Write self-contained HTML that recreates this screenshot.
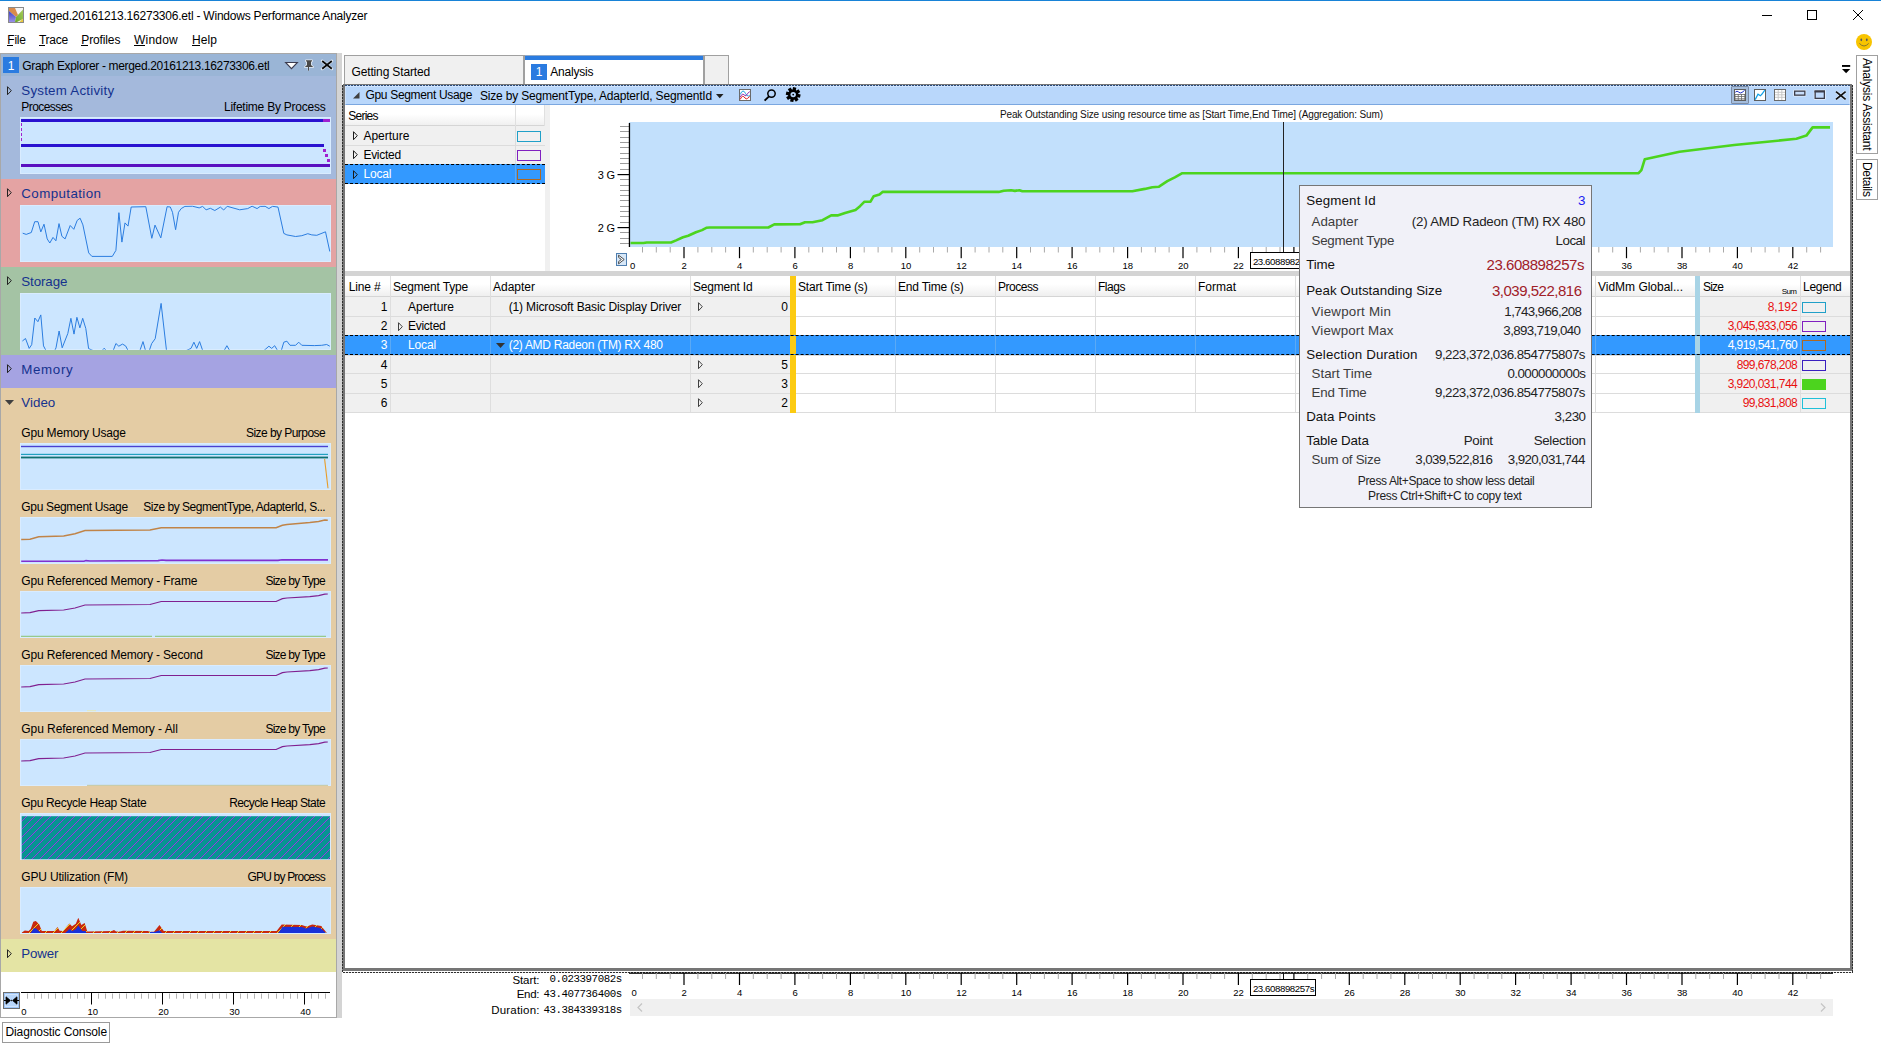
<!DOCTYPE html>
<html lang="en"><head><meta charset="utf-8"><title>merged.20161213.16273306.etl - Windows Performance Analyzer</title>
<style>
html,body{margin:0;padding:0;background:#fff;}
body{width:1881px;height:1045px;overflow:hidden;font-family:"Liberation Sans",sans-serif;font-size:12px;color:#000;}
#app{position:relative;width:1881px;height:1045px;overflow:hidden;background:#fff;}
.b{position:absolute;box-sizing:border-box;}
.t{position:absolute;white-space:pre;}
svg{position:absolute;overflow:visible;}
u{text-decoration:underline;text-underline-offset:1px;}
.vt{writing-mode:vertical-rl;transform-origin:0 0;}

</style></head>
<body>
<div id="app">
<header id="titlebar">
<div class="b" style="left:0px;top:0px;width:1881px;height:1px;background:#1883d7;"></div>
<svg style="left:8px;top:7px" width="16" height="16" viewBox="0 0 16 16" ><defs><linearGradient id="gb" x1="0" y1="0" x2="0" y2="1"><stop offset="0" stop-color="#3f3fc4"/><stop offset="1" stop-color="#9a92e6"/></linearGradient>
<linearGradient id="gg" x1="0" y1="1" x2="1" y2="0"><stop offset="0" stop-color="#6aa82a"/><stop offset="1" stop-color="#a8cc5a"/></linearGradient></defs>
<rect x="0.5" y="0.5" width="15" height="15" fill="#f6f6f6" stroke="#8a8a8a"/>
<path d="M1 1 L7 1 L10 8 L8 10 L1 4 Z" fill="#d98c4c"/><path d="M1 4 L8 10 L7 15 L1 15 Z" fill="url(#gb)"/>
<path d="M8 10 L15 2.5 L15 12 L9 15 L7 15 Z" fill="url(#gg)"/><path d="M11.5 15 L15 11.5 L15 15 Z" fill="#e8c840"/></svg>
<span class="t" style="top:8px;font-size:12px;line-height:16px;letter-spacing:-0.218px;left:29.30px;">merged.20161213.16273306.etl - Windows Performance Analyzer</span>
<svg style="left:1762px;top:15px" width="10" height="1" viewBox="0 0 10 1" ><rect width="10" height="1" fill="#000"/></svg>
<svg style="left:1807px;top:10px" width="10" height="10" viewBox="0 0 10 10" ><rect x="0.5" y="0.5" width="9" height="9" fill="none" stroke="#000"/></svg>
<svg style="left:1853px;top:10px" width="10" height="10" viewBox="0 0 10 10" ><path d="M0 0 L10 10 M10 0 L0 10" stroke="#000" stroke-width="1"/></svg>
</header>
<nav id="menubar">
<span class="t" style="top:32px;font-size:12px;line-height:16px;letter-spacing:-0.211px;left:7.30px;color:#000;">File</span>
<span class="t" style="top:32px;font-size:12px;line-height:16px;letter-spacing:-0.247px;left:38.90px;color:#000;">Trace</span>
<span class="t" style="top:32px;font-size:12px;line-height:16px;letter-spacing:-0.127px;left:81.30px;color:#000;">Profiles</span>
<span class="t" style="top:32px;font-size:12px;line-height:16px;letter-spacing:0.219px;left:134.00px;color:#000;">Window</span>
<span class="t" style="top:32px;font-size:12px;line-height:16px;letter-spacing:0.078px;left:192.00px;color:#000;">Help</span>
<div class="b" style="left:7.3px;top:45px;width:5.5px;height:1px;background:#000;"></div>
<div class="b" style="left:38.9px;top:45px;width:6px;height:1px;background:#000;"></div>
<div class="b" style="left:81.3px;top:45px;width:6.5px;height:1px;background:#000;"></div>
<div class="b" style="left:134px;top:45px;width:11px;height:1px;background:#000;"></div>
<div class="b" style="left:192px;top:45px;width:8px;height:1px;background:#000;"></div>
<svg style="left:1856px;top:34px" width="16" height="16" viewBox="0 0 16 16" ><circle cx="8" cy="8" r="8" fill="#f8c400"/><ellipse cx="5.3" cy="5.8" rx="0.9" ry="1.35" fill="#56565e"/><ellipse cx="10.8" cy="5.8" rx="0.9" ry="1.35" fill="#56565e"/>
<path d="M3.4 9.4 Q8 14.6 12.7 9.4" fill="none" stroke="#7a6c30" stroke-width="0.9"/></svg>
</nav>
<aside id="graph-explorer">
<div class="b" style="left:0px;top:53px;width:342px;height:965px;background:#d4d4d4;"></div>
<div class="b" style="left:0px;top:53px;width:337px;height:965px;background:#a8a8a8;"></div>
<div class="b" style="left:1px;top:54px;width:335px;height:963px;background:#fff;"></div>
<div class="b" style="left:1px;top:54px;width:335px;height:22px;background:#9ab5d6;"></div>
<div class="b" style="left:3px;top:57px;width:16px;height:16px;background:#2a7be0;"></div>
<span class="t" style="top:58px;font-size:12px;line-height:16px;left:7.66px;color:#fff;">1</span>
<span class="t" style="top:58px;font-size:12px;line-height:16px;letter-spacing:-0.338px;left:22.30px;">Graph Explorer - merged.20161213.16273306.etl</span>
<svg style="left:284px;top:61px" width="15" height="9" viewBox="0 0 15 9" ><path d="M1.6 1.5 L13.4 1.5 L7.5 7.6 Z" fill="#fff" stroke="#3c3c50" stroke-width="1.1" stroke-linejoin="miter"/></svg>
<svg style="left:302px;top:58px" width="14" height="14" viewBox="0 0 14 14" ><g fill="#fff" stroke="#fff" stroke-width="1.6" stroke-linejoin="round" opacity="0.75"><path d="M4 2.2 H10 V3.4 H9 V7 L11.2 9 H2.8 L5 7 V3.4 H4 Z"/><path d="M6.5 9 V12.4"/></g><path d="M4 2.2 H10 V3.4 H9 V7 L11.2 9 H2.8 L5 7 V3.4 H4 Z" fill="#4a4a4a"/><path d="M6.5 9 V12.6" stroke="#4a4a4a" stroke-width="1"/></svg>
<svg style="left:320px;top:59px" width="14" height="12" viewBox="0 0 14 12" ><path d="M2.2 2 L11.8 9.8 M11.8 2 L2.2 9.8" stroke="#fff" stroke-opacity="0.7" stroke-width="2.9" stroke-linecap="round"/><path d="M2.2 2 L11.8 9.8 M11.8 2 L2.2 9.8" stroke="#0a0a0a" stroke-width="1.8"/></svg>
<div class="b" style="left:1px;top:76px;width:335px;height:103px;background:#a4b9dc;"></div>
<span class="t" style="top:82px;font-size:13.33px;line-height:17px;letter-spacing:0.225px;left:21.30px;color:#15328e;">System Activity</span>
<svg style="left:7px;top:85.5px" width="6" height="10" viewBox="0 0 6 10" ><path d="M0.5 0.7 L0.5 8.7 L4.3 4.7 Z" fill="none" stroke="#222" stroke-width="1"/></svg>
<div class="b" style="left:1px;top:179px;width:335px;height:88px;background:#e4a3a3;"></div>
<span class="t" style="top:185px;font-size:13.33px;line-height:17px;letter-spacing:0.402px;left:21.30px;color:#15328e;">Computation</span>
<svg style="left:7px;top:188.3px" width="6" height="10" viewBox="0 0 6 10" ><path d="M0.5 0.7 L0.5 8.7 L4.3 4.7 Z" fill="none" stroke="#222" stroke-width="1"/></svg>
<div class="b" style="left:1px;top:267px;width:335px;height:88px;background:#a4c3a4;"></div>
<span class="t" style="top:273px;font-size:13.33px;line-height:17px;letter-spacing:-0.098px;left:21.30px;color:#15328e;">Storage</span>
<svg style="left:7px;top:276.4px" width="6" height="10" viewBox="0 0 6 10" ><path d="M0.5 0.7 L0.5 8.7 L4.3 4.7 Z" fill="none" stroke="#222" stroke-width="1"/></svg>
<div class="b" style="left:1px;top:355px;width:335px;height:33px;background:#a5a3e2;"></div>
<span class="t" style="top:361px;font-size:13.33px;line-height:17px;letter-spacing:0.643px;left:21.30px;color:#15328e;">Memory</span>
<svg style="left:7px;top:364.1px" width="6" height="10" viewBox="0 0 6 10" ><path d="M0.5 0.7 L0.5 8.7 L4.3 4.7 Z" fill="none" stroke="#222" stroke-width="1"/></svg>
<div class="b" style="left:1px;top:388px;width:335px;height:551px;background:#e4cca4;"></div>
<span class="t" style="top:394px;font-size:13.33px;line-height:17px;letter-spacing:0.028px;left:21.30px;color:#15328e;">Video</span>
<svg style="left:5px;top:399.5px" width="10" height="6" viewBox="0 0 10 6" ><path d="M0 0 L9 0 L4.5 5 Z" fill="#404040"/></svg>
<div class="b" style="left:1px;top:939px;width:335px;height:33px;background:#e4e4a4;"></div>
<span class="t" style="top:945px;font-size:13.33px;line-height:17px;letter-spacing:-0.156px;left:21.30px;color:#15328e;">Power</span>
<svg style="left:7px;top:948.5px" width="6" height="10" viewBox="0 0 6 10" ><path d="M0.5 0.7 L0.5 8.7 L4.3 4.7 Z" fill="none" stroke="#222" stroke-width="1"/></svg>
<span class="t" style="top:99px;font-size:12px;line-height:16px;letter-spacing:-0.559px;left:21.30px;">Processes</span>
<span class="t" style="top:99px;font-size:12px;line-height:16px;letter-spacing:-0.239px;left:223.96px;">Lifetime By Process</span>
<svg style="left:20px;top:117px;overflow:hidden;background:#cce6ff;outline:1px solid rgba(255,255,255,0.25);outline-offset:-1px" width="311" height="57" viewBox="20 117 311 57"><rect x="21" y="119" width="302" height="3" fill="#2a12d0"/><rect x="323" y="119" width="7" height="3" fill="#a020d0"/>
<rect x="21" y="123" width="1" height="3" fill="#a020d0"/><rect x="21" y="128" width="1" height="3" fill="#a020d0"/><rect x="21" y="133" width="1" height="3" fill="#a020d0"/><rect x="21" y="138" width="1" height="3" fill="#a020d0"/>
<rect x="21" y="144" width="303" height="3" fill="#2a12d0"/>
<rect x="323" y="149" width="3" height="3" fill="#a020d0"/><rect x="325" y="154" width="3" height="3" fill="#a020d0"/><rect x="327" y="159" width="3" height="3" fill="#a020d0"/>
<rect x="21" y="164" width="309" height="3" fill="#5a10c0"/></svg>
<svg style="left:20px;top:205px;overflow:hidden;background:#cce6ff;outline:1px solid rgba(255,255,255,0.25);outline-offset:-1px" width="311" height="57" viewBox="20 205 311 57"><polyline points="22.7,233.2 26.2,234.4 31.3,232.5 34.7,221.7 38.0,221.7 40.8,231.9 44.0,224.2 47.2,238.9 49.8,243.0 53.0,237.4 55.9,240.8 59.0,223.6 61.9,236.3 65.1,238.9 70.2,225.5 73.8,229.3 77.2,220.4 80.1,218.2 82.9,224.9 88.7,252.9 91.9,256.4 112.3,256.4 115.9,250.4 118.9,212.7 121.9,242.1 125.0,222.9 128.0,226.1 131.2,207.0 145.8,206.7 151.8,238.3 155.0,225.1 160.8,237.9 167.1,206.7 170.3,207.0 172.5,212.3 175.6,229.7 178.5,212.3 181.2,208.6 184.9,206.4 192.4,206.2 199.2,207.9 202.6,206.4 206.1,209.8 210.4,208.3 214.8,210.5 220.4,207.1 223.7,210.0 227.2,206.3 239.7,209.8 247.7,208.6 252.1,206.2 257.1,208.6 260.2,206.4 265.1,206.3 268.9,208.6 272.6,206.3 278.0,207.1 283.8,233.4 286.9,234.9 295.6,236.5 301.8,235.7 307.8,233.7 311.8,234.9 316.8,235.3 325.5,231.8 329.8,251.5" fill="none" stroke="#2b7de0" stroke-width="1" stroke-linejoin="round"/></svg>
<svg style="left:20px;top:293px;overflow:hidden;background:#cce6ff;outline:1px solid rgba(255,255,255,0.25);outline-offset:-1px" width="311" height="57" viewBox="20 293 311 57"><polyline points="22.4,341.0 25.5,338.5 29.2,348.4 31.7,344.7 34.8,318.0 37.9,321.7 40.8,314.9 43.5,345.9 46.0,350.6 54.7,350.6 56.0,347.8 59.1,331.0 62.2,347.8 67.8,333.5 70.9,318.3 74.0,334.1 76.9,317.3 79.9,327.9 82.7,318.3 85.8,328.5 88.6,348.6 93.3,350.6 102.0,350.6 104.2,348.2 106.3,350.6 113.2,350.6 115.9,343.5 118.8,346.2 122.5,344.1 125.6,345.9 128.1,350.6 139.9,350.6 143.0,341.6 145.5,350.6 149.3,350.6 151.7,343.5 155.2,338.7 161.1,303.4 166.5,350.6 186.1,350.6 191.0,348.4 193.9,342.2 196.7,348.4 199.6,341.6 202.7,350.6 224.1,350.6 226.9,345.7 229.7,350.6 263.9,350.6 268.9,346.2 271.7,348.4 274.7,345.7 277.6,350.6 281.3,350.6 283.8,342.2 286.9,341.2 290.0,345.3 295.6,345.3 298.7,342.2 301.8,345.3 314.3,345.6 321.7,345.3 326.7,344.5 329.8,346.2" fill="none" stroke="#2b7de0" stroke-width="1" stroke-linejoin="round"/></svg>
<span class="t" style="top:425px;font-size:12px;line-height:16px;letter-spacing:-0.180px;left:21.30px;">Gpu Memory Usage</span>
<span class="t" style="top:425px;font-size:12px;line-height:16px;letter-spacing:-0.546px;left:245.95px;">Size by Purpose</span>
<span class="t" style="top:499px;font-size:12px;line-height:16px;letter-spacing:-0.328px;left:21.30px;">Gpu Segment Usage</span>
<span class="t" style="top:499px;font-size:12px;line-height:16px;letter-spacing:-0.485px;left:143.22px;">Size by SegmentType, AdapterId, S...</span>
<span class="t" style="top:573px;font-size:12px;line-height:16px;letter-spacing:-0.140px;left:21.30px;">Gpu Referenced Memory - Frame</span>
<span class="t" style="top:573px;font-size:12px;line-height:16px;letter-spacing:-0.749px;left:265.45px;">Size by Type</span>
<span class="t" style="top:647px;font-size:12px;line-height:16px;letter-spacing:-0.153px;left:21.30px;">Gpu Referenced Memory - Second</span>
<span class="t" style="top:647px;font-size:12px;line-height:16px;letter-spacing:-0.749px;left:265.45px;">Size by Type</span>
<span class="t" style="top:721px;font-size:12px;line-height:16px;letter-spacing:-0.058px;left:21.30px;">Gpu Referenced Memory - All</span>
<span class="t" style="top:721px;font-size:12px;line-height:16px;letter-spacing:-0.749px;left:265.45px;">Size by Type</span>
<span class="t" style="top:795px;font-size:12px;line-height:16px;letter-spacing:-0.322px;left:21.30px;">Gpu Recycle Heap State</span>
<span class="t" style="top:795px;font-size:12px;line-height:16px;letter-spacing:-0.559px;left:229.14px;">Recycle Heap State</span>
<span class="t" style="top:869px;font-size:12px;line-height:16px;letter-spacing:-0.176px;left:21.30px;">GPU Utilization (FM)</span>
<span class="t" style="top:869px;font-size:12px;line-height:16px;letter-spacing:-0.800px;left:247.40px;">GPU by Process</span>
<svg style="left:20px;top:443px;overflow:hidden;background:#cce6ff;outline:1px solid rgba(255,255,255,0.25);outline-offset:-1px" width="311" height="47" viewBox="20 443 311 47"><rect x="21" y="445.8" width="307" height="1.4" fill="#4a40d0"/><rect x="21" y="453.8" width="307" height="1.2" fill="#20a0c0"/>
<rect x="21" y="456.6" width="307" height="1.8" fill="#107070"/><path d="M324.6 459 L328 488.2" stroke="#e89c28" stroke-width="1.1" fill="none"/></svg>
<svg style="left:20px;top:517px;overflow:hidden;background:#cce6ff;outline:1px solid rgba(255,255,255,0.25);outline-offset:-1px" width="311" height="47" viewBox="20 517 311 47"><polyline points="21.2,539.5 30.0,539.2 38.7,536.7 63.7,536.0 75.0,533.7 85.0,530.5 150.0,530.0 161.2,527.7 276.1,527.7 282.4,525.3 287.0,524.5 309.8,522.5 318.6,521.5 324.8,520.0 327.8,520.2" fill="none" stroke="#c08448" stroke-width="1.5"/><polyline points="21.2,561.2 84,561.2 86,560.6 90,561 158,560.6 162,560 166,560.4 278,560.4 282,559.8 328,559.9" fill="none" stroke="#8030d0" stroke-width="1.6"/></svg>
<svg style="left:20px;top:591px;overflow:hidden;background:#cce6ff;outline:1px solid rgba(255,255,255,0.25);outline-offset:-1px" width="311" height="47" viewBox="20 591 311 47"><polyline points="21.2,613.0 30.0,612.7 38.7,610.7 63.7,610.0 75.0,608.0 85.0,605.0 150.0,604.5 161.2,601.5 276.1,601.5 282.4,598.7 287.0,598.0 309.8,596.7 318.6,595.7 324.8,594.2 327.8,594.0" fill="none" stroke="#802090" stroke-width="1.2"/><path d="M21 636.3 L152 636.3 M155 636.3 L326 636.3" stroke="#80c060" stroke-width="0.9"/></svg>
<svg style="left:20px;top:665px;overflow:hidden;background:#cce6ff;outline:1px solid rgba(255,255,255,0.25);outline-offset:-1px" width="311" height="47" viewBox="20 665 311 47"><polyline points="21.2,687.0 30.0,686.7 38.7,684.7 63.7,684.0 75.0,682.0 85.0,679.0 150.0,678.5 161.2,675.5 276.1,675.5 282.4,672.7 287.0,672.0 309.8,670.7 318.6,669.7 324.8,668.2 327.8,668.0" fill="none" stroke="#802090" stroke-width="1.2"/><path d="M87 710.8 L96 710.8" stroke="#e8e8b0" stroke-width="1"/></svg>
<svg style="left:20px;top:739px;overflow:hidden;background:#cce6ff;outline:1px solid rgba(255,255,255,0.25);outline-offset:-1px" width="311" height="47" viewBox="20 739 311 47"><polyline points="21.2,761.0 30.0,760.7 38.7,758.7 63.7,758.0 75.0,756.0 85.0,753.0 150.0,752.5 161.2,749.5 276.1,749.5 282.4,746.7 287.0,746.0 309.8,744.7 318.6,743.7 324.8,742.2 327.8,742.0" fill="none" stroke="#802090" stroke-width="1.2"/><path d="M87 785.4 L328 785.4" stroke="#b4b070" stroke-width="0.9"/></svg>
<svg style="left:20px;top:813px;overflow:hidden;background:#cce6ff;outline:1px solid rgba(255,255,255,0.25);outline-offset:-1px" width="311" height="47" viewBox="20 813 311 47"><defs><pattern id="hatch" width="8" height="8" patternUnits="userSpaceOnUse" patternTransform="translate(19 816)"><rect width="8" height="8" fill="#079393"/><path d="M-1 9 L9 -1 M-1 1 L1 -1 M7 9 L9 7" stroke="#9a35e6" stroke-width="1.0"/></pattern></defs>
<rect x="21.7" y="816.2" width="308.3" height="43.2" fill="url(#hatch)"/></svg>
<svg style="left:20px;top:887px;overflow:hidden;background:#cce6ff;outline:1px solid rgba(255,255,255,0.25);outline-offset:-1px" width="311" height="47" viewBox="20 887 311 47"><defs><pattern id="hatch2" width="8" height="8" patternUnits="userSpaceOnUse" patternTransform="translate(2 0)"><rect width="8" height="8" fill="#c8280f"/><path d="M-1 9 L9 -1 M-1 1 L1 -1 M7 9 L9 7" stroke="#f0e020" stroke-width="0.95"/></pattern></defs><polygon points="21.8,933.0 21.8,932.5 24.8,930.6 28.6,931.0 30.7,928.9 33.3,921.7 35.8,921.1 39.2,924.2 41.8,931.0 54.5,931.0 57.5,927.0 59.6,930.8 63.0,931.0 69.4,923.5 72.0,926.3 75.8,923.8 78.3,917.8 81.3,925.0 84.7,923.0 87.3,931.4 111.9,931.0 114.0,930.0 116.2,931.6 120.0,931.6 123.0,930.8 147.6,931.0 150.2,931.8 154.0,931.8 159.5,925.0 163.8,931.0 276.6,931.0 281.7,924.6 301.7,924.9 306.4,926.6 312.3,924.4 321.3,925.9 326.8,933.0" fill="url(#hatch2)"/><polygon points="30.7,933.0 33.7,928.3 36.2,928.5 40.9,933.0" fill="#1a30d8"/><polygon points="65.2,933.0 69.4,928.9 72.4,931.0 75.8,929.3 78.3,925.5 82.2,931.0 85.6,931.0 86.4,933.0" fill="#1a30d8"/><polygon points="150.0,933.0 150.0,932.0 154.5,932.0 159.5,930.2 162.1,933.0" fill="#1a30d8"/><polygon points="278.3,933.0 282.6,926.8 301.7,926.9 306.4,928.6 312.3,926.6 320.5,928.0 326.0,933.0" fill="#1a30d8"/></svg>
<svg style="left:0px;top:0px" width="340" height="1045" viewBox="0 0 340 1045" ><rect x="21" y="992" width="309" height="1" fill="#000"/><rect x="27" y="993.5" width="1" height="5.2" fill="#b4b4b4"/><rect x="34" y="993.5" width="1" height="5.2" fill="#b4b4b4"/><rect x="41" y="993.5" width="1" height="5.2" fill="#b4b4b4"/><rect x="48" y="993.5" width="1" height="5.2" fill="#b4b4b4"/><rect x="55" y="993.5" width="1" height="5.2" fill="#b4b4b4"/><rect x="62" y="993.5" width="1" height="5.2" fill="#b4b4b4"/><rect x="70" y="993.5" width="1" height="5.2" fill="#b4b4b4"/><rect x="77" y="993.5" width="1" height="5.2" fill="#b4b4b4"/><rect x="84" y="993.5" width="1" height="5.2" fill="#b4b4b4"/><rect x="91" y="992" width="1" height="12.5" fill="#000"/><rect x="98" y="993.5" width="1" height="5.2" fill="#b4b4b4"/><rect x="105" y="993.5" width="1" height="5.2" fill="#b4b4b4"/><rect x="112" y="993.5" width="1" height="5.2" fill="#b4b4b4"/><rect x="119" y="993.5" width="1" height="5.2" fill="#b4b4b4"/><rect x="126" y="993.5" width="1" height="5.2" fill="#b4b4b4"/><rect x="134" y="993.5" width="1" height="5.2" fill="#b4b4b4"/><rect x="141" y="993.5" width="1" height="5.2" fill="#b4b4b4"/><rect x="148" y="993.5" width="1" height="5.2" fill="#b4b4b4"/><rect x="155" y="993.5" width="1" height="5.2" fill="#b4b4b4"/><rect x="162" y="992" width="1" height="12.5" fill="#000"/><rect x="169" y="993.5" width="1" height="5.2" fill="#b4b4b4"/><rect x="176" y="993.5" width="1" height="5.2" fill="#b4b4b4"/><rect x="183" y="993.5" width="1" height="5.2" fill="#b4b4b4"/><rect x="190" y="993.5" width="1" height="5.2" fill="#b4b4b4"/><rect x="197" y="993.5" width="1" height="5.2" fill="#b4b4b4"/><rect x="205" y="993.5" width="1" height="5.2" fill="#b4b4b4"/><rect x="212" y="993.5" width="1" height="5.2" fill="#b4b4b4"/><rect x="219" y="993.5" width="1" height="5.2" fill="#b4b4b4"/><rect x="226" y="993.5" width="1" height="5.2" fill="#b4b4b4"/><rect x="233" y="992" width="1" height="12.5" fill="#000"/><rect x="240" y="993.5" width="1" height="5.2" fill="#b4b4b4"/><rect x="247" y="993.5" width="1" height="5.2" fill="#b4b4b4"/><rect x="254" y="993.5" width="1" height="5.2" fill="#b4b4b4"/><rect x="261" y="993.5" width="1" height="5.2" fill="#b4b4b4"/><rect x="268" y="993.5" width="1" height="5.2" fill="#b4b4b4"/><rect x="276" y="993.5" width="1" height="5.2" fill="#b4b4b4"/><rect x="283" y="993.5" width="1" height="5.2" fill="#b4b4b4"/><rect x="290" y="993.5" width="1" height="5.2" fill="#b4b4b4"/><rect x="297" y="993.5" width="1" height="5.2" fill="#b4b4b4"/><rect x="304" y="992" width="1" height="12.5" fill="#000"/><rect x="311" y="993.5" width="1" height="5.2" fill="#b4b4b4"/><rect x="318" y="993.5" width="1" height="5.2" fill="#b4b4b4"/><rect x="325" y="993.5" width="1" height="5.2" fill="#b4b4b4"/></svg>
<span class="t" style="top:1005px;font-size:9.5px;line-height:13px;left:21.20px;">0</span>
<span class="t" style="top:1005px;font-size:9.5px;line-height:13px;letter-spacing:-0.039px;left:87.50px;">10</span>
<span class="t" style="top:1005px;font-size:9.5px;line-height:13px;letter-spacing:-0.039px;left:158.30px;">20</span>
<span class="t" style="top:1005px;font-size:9.5px;line-height:13px;letter-spacing:-0.039px;left:229.20px;">30</span>
<span class="t" style="top:1005px;font-size:9.5px;line-height:13px;letter-spacing:-0.039px;left:300.20px;">40</span>
<svg style="left:3px;top:992px" width="17" height="17" viewBox="0 0 17 17" ><rect x="0.5" y="0.5" width="16" height="16" fill="#9ec6f8" stroke="#6e6e6e"/><rect x="2.5" y="2.5" width="12" height="12" fill="#b9d7fb" stroke="#d2e5fc"/><path d="M1 8.5 L7 8.5 M10 8.5 L16 8.5" stroke="#000" stroke-width="1.2"/><path d="M3 4.8 L7.4 8.5 L3 12.2 Z M14 4.8 L9.6 8.5 L14 12.2 Z" fill="#000" stroke="#000" stroke-width="0.8" stroke-linejoin="round"/><rect x="8" y="7.8" width="1" height="1.4" fill="#222"/></svg>
</aside>
<footer id="statusbar">
<div class="b" style="left:2px;top:1022px;width:108px;height:21px;background:#fff;border:1px solid #9a9a9a;"></div>
<span class="t" style="top:1024px;font-size:12px;line-height:16px;letter-spacing:-0.105px;left:5.50px;">Diagnostic Console</span>
</footer>
<main id="analysis">
<div id="tabs">
<div class="b" style="left:344px;top:55px;width:181px;height:30px;background:#f0f0f0;border:1px solid #a0a0a0;border-right:2px solid #a0a0a0;border-bottom:none;"></div>
<span class="t" style="top:64px;font-size:12px;line-height:16px;letter-spacing:-0.148px;left:351.50px;">Getting Started</span>
<div class="b" style="left:525px;top:55px;width:180px;height:30px;background:#fff;border-right:2px solid #a0a0a0;"></div>
<div class="b" style="left:525px;top:55px;width:178px;height:1px;background:#8fa9c8;"></div>
<div class="b" style="left:525px;top:55.6px;width:178px;height:4px;background:#2a7be0;"></div>
<div class="b" style="left:531px;top:64px;width:16px;height:16px;background:#2a7be0;"></div>
<span class="t" style="top:64px;font-size:12px;line-height:16px;left:535.66px;color:#fff;">1</span>
<span class="t" style="top:64px;font-size:12px;line-height:16px;letter-spacing:-0.211px;left:550.30px;">Analysis</span>
<div class="b" style="left:705px;top:55px;width:24px;height:30px;background:#f0f0f0;border-top:1px solid #a0a0a0;border-right:1px solid #a0a0a0;"></div>
<svg style="left:1842px;top:65px" width="9" height="9" viewBox="0 0 9 9" ><rect x="0" y="0" width="8.2" height="1.9" fill="#000"/><path d="M0 4 L8.2 4 L4.1 8.2 Z" fill="#000"/></svg>
<div class="b" style="left:1856px;top:55px;width:22px;height:99px;background:#fff;border:1px solid #a0a0a0;"></div>
<div class="b" style="left:1856px;top:159px;width:22px;height:41px;background:#fff;border:1px solid #a0a0a0;"></div>
<span class="t vt" style="left:1859.5px;top:58px;font-size:12px;line-height:14px;letter-spacing:-0.2px">Analysis Assistant</span>
<span class="t vt" style="left:1859.5px;top:161.5px;font-size:12px;line-height:14px;letter-spacing:-0.3px">Details</span>
</div>
<section id="gpu-segment-usage">
<div class="b" style="left:343px;top:84px;width:1509px;height:887px;background:#fff;border:2px solid #757575;border-top-width:1px;border-bottom-width:3px;"></div>
<div class="b" style="left:342px;top:85px;width:1px;height:887px;background:repeating-linear-gradient(180deg,#2e2e2e 0,#2e2e2e 2px,#8a8a8a 2px,#8a8a8a 3px);"></div>
<div class="b" style="left:1852px;top:85px;width:1px;height:887px;background:repeating-linear-gradient(180deg,#2e2e2e 0,#2e2e2e 2px,#8a8a8a 2px,#8a8a8a 3px);"></div>
<div class="b" style="left:343px;top:971.5px;width:1510px;height:1px;background:repeating-linear-gradient(90deg,#2e2e2e 0,#2e2e2e 2px,#e4e4e4 2px,#e4e4e4 3px);"></div>
<div class="b" style="left:345px;top:86px;width:1505px;height:19px;background:#b9d7fb;border:1px solid #cfe3fc;border-bottom:1px solid #7ba7e0;"></div>
<div class="b" style="left:345px;top:85px;width:1505px;height:1px;background:repeating-linear-gradient(90deg,#2b4a78 0,#2b4a78 2px,#b9d7fb 2px,#b9d7fb 3px);"></div>
<svg style="left:353px;top:92px" width="7" height="7" viewBox="0 0 7 7" ><path d="M0 6.5 L6.5 6.5 L6.5 0 Z" fill="#404040"/></svg>
<span class="t" style="top:87px;font-size:12px;line-height:16px;letter-spacing:-0.328px;left:365.50px;">Gpu Segment Usage</span>
<span class="t" style="top:88px;font-size:12px;line-height:16px;letter-spacing:-0.183px;left:480.00px;">Size by SegmentType, AdapterId, SegmentId</span>
<svg style="left:716px;top:94px" width="8" height="5" viewBox="0 0 8 5" ><path d="M0 0 L7.5 0 L3.75 4.2 Z" fill="#222"/></svg>
<svg style="left:739px;top:89px" width="12" height="12" viewBox="0 0 12 12" ><rect x="0.5" y="0.5" width="11" height="11" fill="#fff" stroke="#6a6a6a"/><path d="M1.2 5.6 Q2.6 2 4 2 T6.6 4.6 T9.5 7 L10.8 6.2" fill="none" stroke="#20a4e4" stroke-width="1"/><path d="M1.2 8.2 Q2.6 5 3.8 5.2 T6 6.6 T8.6 4.4 L10.8 2.6" fill="none" stroke="#9030b0" stroke-width="1"/><path d="M1.2 10.4 Q2.8 7 3.8 7.2 T6 9 T8.6 9.4 L10.8 7.4" fill="none" stroke="#e02020" stroke-width="1"/></svg>
<svg style="left:763px;top:88px" width="14" height="14" viewBox="0 0 14 14" ><circle cx="8.5" cy="5.6" r="3.7" fill="none" stroke="#000" stroke-width="1.5"/><path d="M6 8.4 L1.6 12.6" stroke="#000" stroke-width="2"/></svg>
<svg style="left:785px;top:87px" width="16" height="16" viewBox="0 0 16 16" ><g transform="rotate(12 8.2 7.6)"><circle cx="8.2" cy="7.6" r="5.1" fill="#000"/><g stroke="#000" stroke-width="3.3"><path d="M8.2 0.3 L8.2 14.9 M0.9 7.6 L15.5 7.6 M3 2.4 L13.4 12.8 M13.4 2.4 L3 12.8"/></g></g><circle cx="8.2" cy="7.6" r="2.7" fill="#b9d7fb"/><circle cx="8.2" cy="7.6" r="0.9" fill="#000"/></svg>
<div class="b" style="left:1731px;top:86px;width:18px;height:18px;background:#a3bcdc;border:1.5px solid #7d8ca4;border-radius:1px;"></div>
<svg style="left:1734px;top:89px" width="12" height="12" viewBox="0 0 12 12" ><rect x="0.5" y="0.5" width="11" height="11" fill="#fff" stroke="#5e5e5e"/><path d="M1.3 3.2 Q3 1.2 4.6 3 T8 3.4 L10.6 1.4" stroke="#2030c8" fill="none" stroke-width="1"/><rect x="1" y="5" width="10" height="6" fill="#6a6a6a"/><g fill="#fff"><rect x="1.4" y="5.8" width="2.4" height="1.2"/><rect x="4.6" y="5.8" width="2.6" height="1.2"/><rect x="8" y="5.8" width="2.4" height="1.2"/><rect x="1.4" y="7.8" width="2.4" height="1.2"/><rect x="4.6" y="7.8" width="2.6" height="1.2"/><rect x="8" y="7.8" width="2.4" height="1.2"/><rect x="1.4" y="9.6" width="2.4" height="1"/><rect x="4.6" y="9.6" width="2.6" height="1"/><rect x="8" y="9.6" width="2.4" height="1"/></g></svg>
<svg style="left:1754px;top:89px" width="12" height="12" viewBox="0 0 12 12" ><rect x="0.5" y="0.5" width="11" height="11" fill="#fff" stroke="#5e5e5e"/><path d="M1.2 10.6 L4 5.2 L6.4 6.8 L8 5 L10.8 1.2" stroke="#10a0e8" stroke-width="1.2" fill="none"/></svg>
<svg style="left:1774px;top:89px" width="12" height="12" viewBox="0 0 12 12" ><rect x="0.5" y="0.5" width="11" height="11" fill="#fff" stroke="#6a6a6a"/><path d="M1 3.3 H11 M1 5.8 H11 M1 8.3 H11 M4.2 1 V11 M7.8 1 V11" stroke="#c4c4c4" stroke-width="0.9"/></svg>
<svg style="left:1793px;top:89px" width="14" height="9" viewBox="0 0 14 9" ><rect x="0.3" y="0.8" width="12.9" height="6.7" fill="#e6f0fe" rx="1"/><rect x="1.65" y="2.15" width="10.2" height="4" fill="#c8defc" stroke="#3c3c48" stroke-width="1.3"/></svg>
<svg style="left:1813px;top:89px" width="14" height="12" viewBox="0 0 14 12" ><rect x="0.8" y="0.8" width="12" height="10" fill="#e6f0fe" rx="1"/><rect x="2.15" y="2.15" width="9.2" height="7.2" fill="#c0dafc" stroke="#3c3c48" stroke-width="1.3"/><rect x="1.5" y="1.5" width="10.5" height="2" fill="#3c3c48"/></svg>
<svg style="left:1834.5px;top:90.5px" width="12" height="9" viewBox="0 0 12 9" ><path d="M1 0.6 L10.6 8.4 M10.6 0.6 L1 8.4" stroke="#fff" stroke-opacity="0.5" stroke-width="3"/><path d="M1 0.6 L10.6 8.4 M10.6 0.6 L1 8.4" stroke="#111" stroke-width="1.8"/></svg>
<div class="b" style="left:345px;top:105px;width:200px;height:21px;background:linear-gradient(#fff 0%,#fff 45%,#f0f0f0 100%);border-bottom:1px solid #d5d5d5;"></div>
<div class="b" style="left:515px;top:105px;width:1px;height:60px;background:#e0e0e0;"></div>
<div class="b" style="left:544px;top:105px;width:1px;height:21px;background:#e0e0e0;"></div>
<span class="t" style="top:108px;font-size:12px;line-height:16px;letter-spacing:-0.753px;left:348.30px;">Series</span>
<div class="b" style="left:345px;top:126px;width:200px;height:57px;background:#f0f0f0;"></div>
<div class="b" style="left:345px;top:145px;width:200px;height:1px;background:#dcdcdc;"></div>
<div class="b" style="left:515px;top:126px;width:1px;height:57px;background:#dcdcdc;"></div>
<div class="b" style="left:345px;top:164px;width:200px;height:20px;background:#3399ff;border-top:1px dashed #000;border-bottom:1px dashed #000;"></div>
<div class="b" style="left:515px;top:165px;width:1px;height:18px;background:#5aa9f5;"></div>
<svg style="left:353px;top:131.3px" width="6" height="10" viewBox="0 0 6 10" ><path d="M0.5 0.7 L0.5 8.7 L4.3 4.7 Z" fill="none" stroke="#1a1a1a" stroke-width="1"/></svg>
<span class="t" style="top:128px;font-size:12px;line-height:16px;letter-spacing:-0.004px;left:363.40px;color:#000;">Aperture</span>
<div class="b" style="left:517px;top:131px;width:24px;height:11px;border:1px solid #20a0c8;"></div>
<svg style="left:353px;top:150.4px" width="6" height="10" viewBox="0 0 6 10" ><path d="M0.5 0.7 L0.5 8.7 L4.3 4.7 Z" fill="none" stroke="#1a1a1a" stroke-width="1"/></svg>
<span class="t" style="top:147px;font-size:12px;line-height:16px;letter-spacing:-0.266px;left:363.40px;color:#000;">Evicted</span>
<div class="b" style="left:517px;top:150px;width:24px;height:11px;border:1px solid #8020c0;"></div>
<svg style="left:353px;top:169.6px" width="6" height="10" viewBox="0 0 6 10" ><path d="M0.5 0.7 L0.5 8.7 L4.3 4.7 Z" fill="none" stroke="#1a1a1a" stroke-width="1"/></svg>
<span class="t" style="top:166px;font-size:12px;line-height:16px;letter-spacing:-0.138px;left:363.40px;color:#fff;">Local</span>
<div class="b" style="left:517px;top:169px;width:24px;height:11px;border:1px solid #b06820;"></div>
<div class="b" style="left:545px;top:105px;width:5px;height:166px;background:#f0f0f0;"></div>
<span class="t" style="top:108px;font-size:10px;line-height:13px;letter-spacing:-0.124px;left:999.94px;color:#111;">Peak Outstanding Size using resource time as [Start Time,End Time] (Aggregation: Sum)</span>
<svg style="left:0px;top:0px" width="1881" height="300" viewBox="0 0 1881 300" ><rect x="629" y="122" width="1204" height="125" fill="#c2e0fc"/><rect x="620" y="126" width="9" height="1" fill="#9c9c9c"/><rect x="620" y="131" width="9" height="1" fill="#9c9c9c"/><rect x="620" y="137" width="9" height="1" fill="#9c9c9c"/><rect x="620" y="142" width="9" height="1" fill="#9c9c9c"/><rect x="620" y="147" width="9" height="1" fill="#9c9c9c"/><rect x="620" y="153" width="9" height="1" fill="#9c9c9c"/><rect x="620" y="158" width="9" height="1" fill="#9c9c9c"/><rect x="620" y="163" width="9" height="1" fill="#9c9c9c"/><rect x="620" y="169" width="9" height="1" fill="#9c9c9c"/><rect x="617.5" y="174" width="12" height="1.2" fill="#000"/><rect x="620" y="179" width="9" height="1" fill="#9c9c9c"/><rect x="620" y="185" width="9" height="1" fill="#9c9c9c"/><rect x="620" y="190" width="9" height="1" fill="#9c9c9c"/><rect x="620" y="195" width="9" height="1" fill="#9c9c9c"/><rect x="620" y="200" width="9" height="1" fill="#9c9c9c"/><rect x="620" y="206" width="9" height="1" fill="#9c9c9c"/><rect x="620" y="211" width="9" height="1" fill="#9c9c9c"/><rect x="620" y="216" width="9" height="1" fill="#9c9c9c"/><rect x="620" y="222" width="9" height="1" fill="#9c9c9c"/><rect x="617.5" y="227" width="12" height="1.2" fill="#000"/><rect x="620" y="232" width="9" height="1" fill="#9c9c9c"/><rect x="620" y="238" width="9" height="1" fill="#9c9c9c"/><rect x="620" y="243" width="9" height="1" fill="#9c9c9c"/><rect x="628.8" y="123" width="1.3" height="124" fill="#000"/><rect x="642.0" y="247" width="1" height="5.5" fill="#a8a8a8"/><rect x="655.8" y="247" width="1" height="5.5" fill="#a8a8a8"/><rect x="669.7" y="247" width="1" height="5.5" fill="#a8a8a8"/><rect x="683.4" y="247" width="1.2" height="11.2" fill="#000"/><rect x="697.4" y="247" width="1" height="5.5" fill="#a8a8a8"/><rect x="711.3" y="247" width="1" height="5.5" fill="#a8a8a8"/><rect x="725.1" y="247" width="1" height="5.5" fill="#a8a8a8"/><rect x="738.9" y="247" width="1.2" height="11.2" fill="#000"/><rect x="752.8" y="247" width="1" height="5.5" fill="#a8a8a8"/><rect x="766.7" y="247" width="1" height="5.5" fill="#a8a8a8"/><rect x="780.6" y="247" width="1" height="5.5" fill="#a8a8a8"/><rect x="794.3" y="247" width="1.2" height="11.2" fill="#000"/><rect x="808.3" y="247" width="1" height="5.5" fill="#a8a8a8"/><rect x="822.1" y="247" width="1" height="5.5" fill="#a8a8a8"/><rect x="836.0" y="247" width="1" height="5.5" fill="#a8a8a8"/><rect x="849.8" y="247" width="1.2" height="11.2" fill="#000"/><rect x="863.7" y="247" width="1" height="5.5" fill="#a8a8a8"/><rect x="877.6" y="247" width="1" height="5.5" fill="#a8a8a8"/><rect x="891.4" y="247" width="1" height="5.5" fill="#a8a8a8"/><rect x="905.2" y="247" width="1.2" height="11.2" fill="#000"/><rect x="919.2" y="247" width="1" height="5.5" fill="#a8a8a8"/><rect x="933.0" y="247" width="1" height="5.5" fill="#a8a8a8"/><rect x="946.9" y="247" width="1" height="5.5" fill="#a8a8a8"/><rect x="960.6" y="247" width="1.2" height="11.2" fill="#000"/><rect x="974.6" y="247" width="1" height="5.5" fill="#a8a8a8"/><rect x="988.5" y="247" width="1" height="5.5" fill="#a8a8a8"/><rect x="1002.3" y="247" width="1" height="5.5" fill="#a8a8a8"/><rect x="1016.1" y="247" width="1.2" height="11.2" fill="#000"/><rect x="1030.0" y="247" width="1" height="5.5" fill="#a8a8a8"/><rect x="1043.9" y="247" width="1" height="5.5" fill="#a8a8a8"/><rect x="1057.8" y="247" width="1" height="5.5" fill="#a8a8a8"/><rect x="1071.5" y="247" width="1.2" height="11.2" fill="#000"/><rect x="1085.5" y="247" width="1" height="5.5" fill="#a8a8a8"/><rect x="1099.3" y="247" width="1" height="5.5" fill="#a8a8a8"/><rect x="1113.2" y="247" width="1" height="5.5" fill="#a8a8a8"/><rect x="1127.0" y="247" width="1.2" height="11.2" fill="#000"/><rect x="1140.9" y="247" width="1" height="5.5" fill="#a8a8a8"/><rect x="1154.8" y="247" width="1" height="5.5" fill="#a8a8a8"/><rect x="1168.6" y="247" width="1" height="5.5" fill="#a8a8a8"/><rect x="1182.4" y="247" width="1.2" height="11.2" fill="#000"/><rect x="1196.4" y="247" width="1" height="5.5" fill="#a8a8a8"/><rect x="1210.2" y="247" width="1" height="5.5" fill="#a8a8a8"/><rect x="1224.1" y="247" width="1" height="5.5" fill="#a8a8a8"/><rect x="1237.8" y="247" width="1.2" height="11.2" fill="#000"/><rect x="1251.8" y="247" width="1" height="5.5" fill="#a8a8a8"/><rect x="1265.7" y="247" width="1" height="5.5" fill="#a8a8a8"/><rect x="1279.5" y="247" width="1" height="5.5" fill="#a8a8a8"/><rect x="1293.3" y="247" width="1.2" height="11.2" fill="#000"/><rect x="1307.2" y="247" width="1" height="5.5" fill="#a8a8a8"/><rect x="1321.1" y="247" width="1" height="5.5" fill="#a8a8a8"/><rect x="1335.0" y="247" width="1" height="5.5" fill="#a8a8a8"/><rect x="1348.7" y="247" width="1.2" height="11.2" fill="#000"/><rect x="1362.7" y="247" width="1" height="5.5" fill="#a8a8a8"/><rect x="1376.5" y="247" width="1" height="5.5" fill="#a8a8a8"/><rect x="1390.4" y="247" width="1" height="5.5" fill="#a8a8a8"/><rect x="1404.2" y="247" width="1.2" height="11.2" fill="#000"/><rect x="1418.1" y="247" width="1" height="5.5" fill="#a8a8a8"/><rect x="1432.0" y="247" width="1" height="5.5" fill="#a8a8a8"/><rect x="1445.8" y="247" width="1" height="5.5" fill="#a8a8a8"/><rect x="1459.6" y="247" width="1.2" height="11.2" fill="#000"/><rect x="1473.6" y="247" width="1" height="5.5" fill="#a8a8a8"/><rect x="1487.4" y="247" width="1" height="5.5" fill="#a8a8a8"/><rect x="1501.3" y="247" width="1" height="5.5" fill="#a8a8a8"/><rect x="1515.0" y="247" width="1.2" height="11.2" fill="#000"/><rect x="1529.0" y="247" width="1" height="5.5" fill="#a8a8a8"/><rect x="1542.9" y="247" width="1" height="5.5" fill="#a8a8a8"/><rect x="1556.7" y="247" width="1" height="5.5" fill="#a8a8a8"/><rect x="1570.5" y="247" width="1.2" height="11.2" fill="#000"/><rect x="1584.4" y="247" width="1" height="5.5" fill="#a8a8a8"/><rect x="1598.3" y="247" width="1" height="5.5" fill="#a8a8a8"/><rect x="1612.2" y="247" width="1" height="5.5" fill="#a8a8a8"/><rect x="1625.9" y="247" width="1.2" height="11.2" fill="#000"/><rect x="1639.9" y="247" width="1" height="5.5" fill="#a8a8a8"/><rect x="1653.7" y="247" width="1" height="5.5" fill="#a8a8a8"/><rect x="1667.6" y="247" width="1" height="5.5" fill="#a8a8a8"/><rect x="1681.4" y="247" width="1.2" height="11.2" fill="#000"/><rect x="1695.3" y="247" width="1" height="5.5" fill="#a8a8a8"/><rect x="1709.2" y="247" width="1" height="5.5" fill="#a8a8a8"/><rect x="1723.0" y="247" width="1" height="5.5" fill="#a8a8a8"/><rect x="1736.8" y="247" width="1.2" height="11.2" fill="#000"/><rect x="1750.8" y="247" width="1" height="5.5" fill="#a8a8a8"/><rect x="1764.6" y="247" width="1" height="5.5" fill="#a8a8a8"/><rect x="1778.5" y="247" width="1" height="5.5" fill="#a8a8a8"/><rect x="1792.2" y="247" width="1.2" height="11.2" fill="#000"/><rect x="1806.2" y="247" width="1" height="5.5" fill="#a8a8a8"/><rect x="1820.1" y="247" width="1" height="5.5" fill="#a8a8a8"/><polyline points="630.5,243.0 643.4,243.0 646.8,242.5 671.0,242.5 676.1,240.4 683.0,237.3 688.2,235.8 695.9,232.3 702.0,230.1 706.3,227.8 709.7,227.5 768.3,227.5 774.3,224.4 800.0,224.3 805.0,222.2 812.5,222.2 822.5,220.2 831.2,215.4 837.5,215.4 845.0,212.9 855.5,209.9 860.0,206.2 864.5,201.7 870.5,201.7 873.7,196.2 879.5,194.4 882.5,191.9 998.7,191.9 1003.7,190.7 1011.1,190.2 1014.9,190.9 1019.4,190.2 1022.4,191.2 1132.3,191.2 1144.8,188.9 1152.3,187.2 1159.0,186.7 1167.3,181.2 1174.8,177.4 1182.3,173.2 1638.6,173.2 1641.4,170.2 1644.8,159.2 1679.5,151.7 1734.2,145.0 1796.4,138.8 1806.4,135.6 1812.6,127.4 1830.0,127.4" fill="none" stroke="#4cd41e" stroke-width="2.6" stroke-linejoin="round"/><rect x="1283" y="122" width="1" height="131" fill="#222"/></svg>
<span class="t" style="top:168px;font-size:11px;line-height:14px;letter-spacing:-0.245px;left:597.76px;">3 G</span>
<span class="t" style="top:221px;font-size:11px;line-height:14px;letter-spacing:-0.245px;left:597.76px;">2 G</span>
<span class="t" style="top:259px;font-size:9.5px;line-height:13px;left:630.00px;">0</span>
<span class="t" style="top:259px;font-size:9.5px;line-height:13px;left:681.59px;">2</span>
<span class="t" style="top:259px;font-size:9.5px;line-height:13px;left:737.03px;">4</span>
<span class="t" style="top:259px;font-size:9.5px;line-height:13px;left:792.47px;">6</span>
<span class="t" style="top:259px;font-size:9.5px;line-height:13px;left:847.91px;">8</span>
<span class="t" style="top:259px;font-size:9.5px;line-height:13px;letter-spacing:-0.039px;left:900.73px;">10</span>
<span class="t" style="top:259px;font-size:9.5px;line-height:13px;letter-spacing:-0.039px;left:956.17px;">12</span>
<span class="t" style="top:259px;font-size:9.5px;line-height:13px;letter-spacing:-0.039px;left:1011.61px;">14</span>
<span class="t" style="top:259px;font-size:9.5px;line-height:13px;letter-spacing:-0.039px;left:1067.05px;">16</span>
<span class="t" style="top:259px;font-size:9.5px;line-height:13px;letter-spacing:-0.039px;left:1122.49px;">18</span>
<span class="t" style="top:259px;font-size:9.5px;line-height:13px;letter-spacing:-0.039px;left:1177.93px;">20</span>
<span class="t" style="top:259px;font-size:9.5px;line-height:13px;letter-spacing:-0.039px;left:1233.37px;">22</span>
<span class="t" style="top:259px;font-size:9.5px;line-height:13px;letter-spacing:-0.039px;left:1621.45px;">36</span>
<span class="t" style="top:259px;font-size:9.5px;line-height:13px;letter-spacing:-0.039px;left:1676.89px;">38</span>
<span class="t" style="top:259px;font-size:9.5px;line-height:13px;letter-spacing:-0.039px;left:1732.33px;">40</span>
<span class="t" style="top:259px;font-size:9.5px;line-height:13px;letter-spacing:-0.039px;left:1787.77px;">42</span>
<svg style="left:616px;top:253px" width="11" height="13" viewBox="0 0 11 13" ><rect x="0.5" y="0.5" width="10" height="12" fill="#d8e8f8" stroke="#4f7fb0"/><path d="M2.6 2.2 L8.2 6.5 L2.6 10.8 L2.6 8.6 L5.4 6.5 L2.6 4.4 Z" fill="#fff" stroke="#222" stroke-width="0.8" stroke-linejoin="round"/></svg>
<div class="b" style="left:1250px;top:252px;width:66px;height:17px;background:#fff;border:1px solid #000;"></div>
<span class="t" style="top:255px;font-size:9.7px;line-height:13px;letter-spacing:-0.432px;left:1252.90px;">23.608898257s</span>
<div class="b" style="left:345px;top:271px;width:1505px;height:5px;background:#d4d4d4;"></div>
<div class="b" style="left:345px;top:276px;width:1505px;height:21px;background:linear-gradient(#fff 0%,#fff 40%,#efefef 100%);border-bottom:1px solid #d5d5d5;"></div>
<div class="b" style="left:345px;top:297px;width:445px;height:116px;background:#f0f0f0;"></div>
<div class="b" style="left:1700px;top:297px;width:150px;height:116px;background:#f0f0f0;"></div>
<div class="b" style="left:390px;top:276px;width:1px;height:137px;background:#dedede;"></div>
<div class="b" style="left:490px;top:276px;width:1px;height:137px;background:#dedede;"></div>
<div class="b" style="left:690px;top:276px;width:1px;height:137px;background:#dedede;"></div>
<div class="b" style="left:895px;top:276px;width:1px;height:137px;background:#dedede;"></div>
<div class="b" style="left:995px;top:276px;width:1px;height:137px;background:#dedede;"></div>
<div class="b" style="left:1095px;top:276px;width:1px;height:137px;background:#dedede;"></div>
<div class="b" style="left:1195px;top:276px;width:1px;height:137px;background:#dedede;"></div>
<div class="b" style="left:1295px;top:276px;width:1px;height:137px;background:#dedede;"></div>
<div class="b" style="left:1395px;top:276px;width:1px;height:137px;background:#dedede;"></div>
<div class="b" style="left:1495px;top:276px;width:1px;height:137px;background:#dedede;"></div>
<div class="b" style="left:1595px;top:276px;width:1px;height:137px;background:#dedede;"></div>
<div class="b" style="left:1800px;top:276px;width:1px;height:137px;background:#dedede;"></div>
<div class="b" style="left:345px;top:316px;width:1505px;height:1px;background:#dcdcdc;"></div>
<div class="b" style="left:345px;top:335px;width:1505px;height:1px;background:#dcdcdc;"></div>
<div class="b" style="left:345px;top:355px;width:1505px;height:1px;background:#dcdcdc;"></div>
<div class="b" style="left:345px;top:373px;width:1505px;height:1px;background:#dcdcdc;"></div>
<div class="b" style="left:345px;top:393px;width:1505px;height:1px;background:#dcdcdc;"></div>
<div class="b" style="left:345px;top:412px;width:1505px;height:1px;background:#dcdcdc;"></div>
<div class="b" style="left:790px;top:276px;width:5.5px;height:137px;background:#fccb12;"></div>
<div class="b" style="left:1695px;top:276px;width:5px;height:137px;background:#a8d4e6;"></div>
<span class="t" style="top:279px;font-size:12px;line-height:16px;letter-spacing:-0.117px;left:348.70px;">Line #</span>
<span class="t" style="top:279px;font-size:12px;line-height:16px;letter-spacing:-0.181px;left:393.00px;">Segment Type</span>
<span class="t" style="top:279px;font-size:12px;line-height:16px;letter-spacing:-0.004px;left:493.00px;">Adapter</span>
<span class="t" style="top:279px;font-size:12px;line-height:16px;letter-spacing:-0.188px;left:693.00px;">Segment Id</span>
<span class="t" style="top:279px;font-size:12px;line-height:16px;letter-spacing:-0.180px;left:798.00px;">Start Time (s)</span>
<span class="t" style="top:279px;font-size:12px;line-height:16px;letter-spacing:-0.210px;left:898.00px;">End Time (s)</span>
<span class="t" style="top:279px;font-size:12px;line-height:16px;letter-spacing:-0.480px;left:998.00px;">Process</span>
<span class="t" style="top:279px;font-size:12px;line-height:16px;letter-spacing:-0.469px;left:1098.00px;">Flags</span>
<span class="t" style="top:279px;font-size:12px;line-height:16px;letter-spacing:-0.003px;left:1198.00px;">Format</span>
<span class="t" style="top:279px;font-size:12px;line-height:16px;letter-spacing:-0.010px;left:1598.00px;">VidMm Global...</span>
<span class="t" style="top:279px;font-size:12px;line-height:16px;letter-spacing:-0.836px;left:1703.00px;">Size</span>
<span class="t" style="top:279px;font-size:12px;line-height:16px;letter-spacing:-0.258px;left:1803.00px;">Legend</span>
<span class="t" style="top:286px;font-size:8px;line-height:11px;letter-spacing:-0.651px;left:1781.85px;">Sum</span>
<div class="b" style="left:345px;top:335px;width:1505px;height:20px;background:#3399ff;border-top:1px dashed #000;border-bottom:1px dashed #000;"></div>
<div class="b" style="left:790px;top:336px;width:5.5px;height:18px;background:#fccb12;"></div>
<div class="b" style="left:1695px;top:336px;width:5px;height:18px;background:#a8d4e6;"></div>
<div class="b" style="left:390px;top:336px;width:1px;height:18px;background:#5aa9f5;"></div>
<div class="b" style="left:490px;top:336px;width:1px;height:18px;background:#5aa9f5;"></div>
<div class="b" style="left:690px;top:336px;width:1px;height:18px;background:#5aa9f5;"></div>
<div class="b" style="left:895px;top:336px;width:1px;height:18px;background:#5aa9f5;"></div>
<div class="b" style="left:995px;top:336px;width:1px;height:18px;background:#5aa9f5;"></div>
<div class="b" style="left:1095px;top:336px;width:1px;height:18px;background:#5aa9f5;"></div>
<div class="b" style="left:1195px;top:336px;width:1px;height:18px;background:#5aa9f5;"></div>
<div class="b" style="left:1295px;top:336px;width:1px;height:18px;background:#5aa9f5;"></div>
<div class="b" style="left:1395px;top:336px;width:1px;height:18px;background:#5aa9f5;"></div>
<div class="b" style="left:1495px;top:336px;width:1px;height:18px;background:#5aa9f5;"></div>
<div class="b" style="left:1595px;top:336px;width:1px;height:18px;background:#5aa9f5;"></div>
<div class="b" style="left:1800px;top:336px;width:1px;height:18px;background:#5aa9f5;"></div>
<span class="t" style="top:299px;font-size:12px;line-height:16px;left:380.81px;color:#000;">1</span>
<span class="t" style="top:318px;font-size:12px;line-height:16px;left:380.81px;color:#000;">2</span>
<span class="t" style="top:337px;font-size:12px;line-height:16px;left:380.81px;color:#fff;">3</span>
<span class="t" style="top:357px;font-size:12px;line-height:16px;left:380.81px;color:#000;">4</span>
<span class="t" style="top:376px;font-size:12px;line-height:16px;left:380.81px;color:#000;">5</span>
<span class="t" style="top:395px;font-size:12px;line-height:16px;left:380.81px;color:#000;">6</span>
<span class="t" style="top:299px;font-size:12px;line-height:16px;letter-spacing:-0.004px;left:408.00px;">Aperture</span>
<span class="t" style="top:318px;font-size:12px;line-height:16px;letter-spacing:-0.266px;left:408.00px;">Evicted</span>
<svg style="left:397.5px;top:321.5px" width="6" height="10" viewBox="0 0 6 10" ><path d="M0.5 0.7 L0.5 8.7 L4.3 4.7 Z" fill="none" stroke="#404040" stroke-width="1"/></svg>
<span class="t" style="top:337px;font-size:12px;line-height:16px;letter-spacing:-0.138px;left:408.00px;color:#fff;">Local</span>
<span class="t" style="top:299px;font-size:12px;line-height:16px;letter-spacing:-0.143px;left:508.70px;">(1) Microsoft Basic Display Driver</span>
<span class="t" style="top:337px;font-size:12px;line-height:16px;letter-spacing:-0.284px;left:508.70px;color:#fff;">(2) AMD Radeon (TM) RX 480</span>
<svg style="left:495.5px;top:342.5px" width="10" height="6" viewBox="0 0 10 6" ><path d="M0 0 L9 0 L4.5 5 Z" fill="#333"/></svg>
<svg style="left:698px;top:302.4px" width="6" height="10" viewBox="0 0 6 10" ><path d="M0.5 0.7 L0.5 8.7 L4.3 4.7 Z" fill="none" stroke="#404040" stroke-width="1"/></svg>
<span class="t" style="top:299px;font-size:12px;line-height:16px;left:781.31px;">0</span>
<svg style="left:698px;top:360.0px" width="6" height="10" viewBox="0 0 6 10" ><path d="M0.5 0.7 L0.5 8.7 L4.3 4.7 Z" fill="none" stroke="#404040" stroke-width="1"/></svg>
<span class="t" style="top:357px;font-size:12px;line-height:16px;left:781.31px;">5</span>
<svg style="left:698px;top:379.2px" width="6" height="10" viewBox="0 0 6 10" ><path d="M0.5 0.7 L0.5 8.7 L4.3 4.7 Z" fill="none" stroke="#404040" stroke-width="1"/></svg>
<span class="t" style="top:376px;font-size:12px;line-height:16px;left:781.31px;">3</span>
<svg style="left:698px;top:398.4px" width="6" height="10" viewBox="0 0 6 10" ><path d="M0.5 0.7 L0.5 8.7 L4.3 4.7 Z" fill="none" stroke="#404040" stroke-width="1"/></svg>
<span class="t" style="top:395px;font-size:12px;line-height:16px;left:781.31px;">2</span>
<span class="t" style="top:299px;font-size:12px;line-height:16px;letter-spacing:-0.006px;left:1767.69px;color:#e81010;">8,192</span>
<div class="b" style="left:1802px;top:302px;width:24px;height:11px;border:1px solid #20a0c8;"></div>
<span class="t" style="top:318px;font-size:12px;line-height:16px;letter-spacing:-0.558px;left:1727.64px;color:#e81010;">3,045,933,056</span>
<div class="b" style="left:1802px;top:321px;width:24px;height:11px;border:1px solid #8020c0;"></div>
<span class="t" style="top:337px;font-size:12px;line-height:16px;letter-spacing:-0.558px;left:1727.64px;color:#fff;">4,919,541,760</span>
<div class="b" style="left:1802px;top:340px;width:24px;height:11px;border:1px solid #b06820;"></div>
<span class="t" style="top:357px;font-size:12px;line-height:16px;letter-spacing:-0.567px;left:1736.63px;color:#e81010;">899,678,208</span>
<div class="b" style="left:1802px;top:360px;width:24px;height:11px;border:1px solid #3a20c0;"></div>
<span class="t" style="top:376px;font-size:12px;line-height:16px;letter-spacing:-0.558px;left:1727.64px;color:#e81010;">3,920,031,744</span>
<div class="b" style="left:1802px;top:379px;width:24px;height:11px;background:#4cd41e;border:1px solid #4cd41e;"></div>
<span class="t" style="top:395px;font-size:12px;line-height:16px;letter-spacing:-0.556px;left:1742.64px;color:#e81010;">99,831,808</span>
<div class="b" style="left:1802px;top:398px;width:24px;height:11px;border:1px solid #20c0d8;"></div>
</section>
<div id="tooltip" role="tooltip">
<div class="b" style="left:1299px;top:185px;width:293px;height:323px;background:#f1f1f8;border:1px solid #767676;"></div>
<span class="t" style="top:192px;font-size:13.33px;line-height:17px;letter-spacing:0.133px;left:1306.20px;color:#111;">Segment Id</span>
<span class="t" style="top:192px;font-size:13.33px;line-height:17px;left:1578.08px;color:#2020f0;">3</span>
<span class="t" style="top:213px;font-size:13.33px;line-height:17px;letter-spacing:-0.027px;left:1311.60px;color:#3c3c3c;">Adapter</span>
<span class="t" style="top:213px;font-size:13.33px;line-height:17px;letter-spacing:-0.221px;left:1411.78px;color:#222;">(2) AMD Radeon (TM) RX 480</span>
<span class="t" style="top:232px;font-size:13.33px;line-height:17px;letter-spacing:-0.267px;left:1311.60px;color:#3c3c3c;">Segment Type</span>
<span class="t" style="top:232px;font-size:13.33px;line-height:17px;letter-spacing:-0.475px;left:1555.53px;color:#222;">Local</span>
<span class="t" style="top:256px;font-size:13.33px;line-height:17px;letter-spacing:-0.156px;left:1306.20px;color:#111;">Time</span>
<span class="t" style="top:255px;font-size:15px;line-height:19px;letter-spacing:-0.457px;left:1486.54px;color:#a02028;">23.608898257s</span>
<span class="t" style="top:282px;font-size:13.33px;line-height:17px;letter-spacing:0.019px;left:1306.20px;color:#111;">Peak Outstanding Size</span>
<span class="t" style="top:281px;font-size:15px;line-height:19px;letter-spacing:-0.495px;left:1492.00px;color:#a02028;">3,039,522,816</span>
<span class="t" style="top:303px;font-size:13.33px;line-height:17px;letter-spacing:0.225px;left:1311.60px;color:#3c3c3c;">Viewport Min</span>
<span class="t" style="top:303px;font-size:13.33px;line-height:17px;letter-spacing:-0.633px;left:1504.37px;color:#222;">1,743,966,208</span>
<span class="t" style="top:322px;font-size:13.33px;line-height:17px;letter-spacing:0.125px;left:1311.60px;color:#3c3c3c;">Viewport Max</span>
<span class="t" style="top:322px;font-size:13.33px;line-height:17px;letter-spacing:-0.633px;left:1503.37px;color:#222;">3,893,719,040</span>
<span class="t" style="top:346px;font-size:13.33px;line-height:17px;letter-spacing:0.143px;left:1306.20px;color:#111;">Selection Duration</span>
<span class="t" style="top:346px;font-size:13.33px;line-height:17px;letter-spacing:-0.514px;left:1434.99px;color:#222;">9,223,372,036.854775807s</span>
<span class="t" style="top:365px;font-size:13.33px;line-height:17px;letter-spacing:-0.023px;left:1311.60px;color:#3c3c3c;">Start Time</span>
<span class="t" style="top:365px;font-size:13.33px;line-height:17px;letter-spacing:-0.542px;left:1507.46px;color:#222;">0.000000000s</span>
<span class="t" style="top:384px;font-size:13.33px;line-height:17px;letter-spacing:-0.164px;left:1311.60px;color:#3c3c3c;">End Time</span>
<span class="t" style="top:384px;font-size:13.33px;line-height:17px;letter-spacing:-0.514px;left:1434.99px;color:#222;">9,223,372,036.854775807s</span>
<span class="t" style="top:408px;font-size:13.33px;line-height:17px;letter-spacing:0.054px;left:1306.20px;color:#111;">Data Points</span>
<span class="t" style="top:408px;font-size:13.33px;line-height:17px;letter-spacing:-0.472px;left:1554.53px;color:#222;">3,230</span>
<span class="t" style="top:432px;font-size:13.33px;line-height:17px;letter-spacing:-0.122px;left:1306.20px;color:#111;">Table Data</span>
<span class="t" style="top:432px;font-size:13.33px;line-height:17px;letter-spacing:-0.316px;left:1533.68px;color:#222;">Selection</span>
<span class="t" style="top:432px;font-size:13.33px;line-height:17px;letter-spacing:-0.278px;left:1463.72px;color:#222;">Point</span>
<span class="t" style="top:451px;font-size:13.33px;line-height:17px;letter-spacing:-0.260px;left:1311.60px;color:#3c3c3c;">Sum of Size</span>
<span class="t" style="top:451px;font-size:13.33px;line-height:17px;letter-spacing:-0.633px;left:1507.87px;color:#222;">3,920,031,744</span>
<span class="t" style="top:451px;font-size:13.33px;line-height:17px;letter-spacing:-0.633px;left:1415.37px;color:#222;">3,039,522,816</span>
<span class="t" style="top:473px;font-size:12px;line-height:16px;letter-spacing:-0.379px;left:1357.86px;color:#222;">Press Alt+Space to show less detail</span>
<span class="t" style="top:488px;font-size:12px;line-height:16px;letter-spacing:-0.341px;left:1368.08px;color:#222;">Press Ctrl+Shift+C to copy text</span>
</div>
<div id="timeline">
<svg style="left:0px;top:0px" width="1881" height="1045" viewBox="0 0 1881 1045" ><rect x="629" y="972.6" width="1204" height="1.2" fill="#000"/><rect x="642.0" y="973" width="1" height="6" fill="#a8a8a8"/><rect x="655.8" y="973" width="1" height="6" fill="#a8a8a8"/><rect x="669.7" y="973" width="1" height="6" fill="#a8a8a8"/><rect x="683.4" y="973" width="1.2" height="12" fill="#000"/><rect x="697.4" y="973" width="1" height="6" fill="#a8a8a8"/><rect x="711.3" y="973" width="1" height="6" fill="#a8a8a8"/><rect x="725.1" y="973" width="1" height="6" fill="#a8a8a8"/><rect x="738.9" y="973" width="1.2" height="12" fill="#000"/><rect x="752.8" y="973" width="1" height="6" fill="#a8a8a8"/><rect x="766.7" y="973" width="1" height="6" fill="#a8a8a8"/><rect x="780.6" y="973" width="1" height="6" fill="#a8a8a8"/><rect x="794.3" y="973" width="1.2" height="12" fill="#000"/><rect x="808.3" y="973" width="1" height="6" fill="#a8a8a8"/><rect x="822.1" y="973" width="1" height="6" fill="#a8a8a8"/><rect x="836.0" y="973" width="1" height="6" fill="#a8a8a8"/><rect x="849.8" y="973" width="1.2" height="12" fill="#000"/><rect x="863.7" y="973" width="1" height="6" fill="#a8a8a8"/><rect x="877.6" y="973" width="1" height="6" fill="#a8a8a8"/><rect x="891.4" y="973" width="1" height="6" fill="#a8a8a8"/><rect x="905.2" y="973" width="1.2" height="12" fill="#000"/><rect x="919.2" y="973" width="1" height="6" fill="#a8a8a8"/><rect x="933.0" y="973" width="1" height="6" fill="#a8a8a8"/><rect x="946.9" y="973" width="1" height="6" fill="#a8a8a8"/><rect x="960.6" y="973" width="1.2" height="12" fill="#000"/><rect x="974.6" y="973" width="1" height="6" fill="#a8a8a8"/><rect x="988.5" y="973" width="1" height="6" fill="#a8a8a8"/><rect x="1002.3" y="973" width="1" height="6" fill="#a8a8a8"/><rect x="1016.1" y="973" width="1.2" height="12" fill="#000"/><rect x="1030.0" y="973" width="1" height="6" fill="#a8a8a8"/><rect x="1043.9" y="973" width="1" height="6" fill="#a8a8a8"/><rect x="1057.8" y="973" width="1" height="6" fill="#a8a8a8"/><rect x="1071.5" y="973" width="1.2" height="12" fill="#000"/><rect x="1085.5" y="973" width="1" height="6" fill="#a8a8a8"/><rect x="1099.3" y="973" width="1" height="6" fill="#a8a8a8"/><rect x="1113.2" y="973" width="1" height="6" fill="#a8a8a8"/><rect x="1127.0" y="973" width="1.2" height="12" fill="#000"/><rect x="1140.9" y="973" width="1" height="6" fill="#a8a8a8"/><rect x="1154.8" y="973" width="1" height="6" fill="#a8a8a8"/><rect x="1168.6" y="973" width="1" height="6" fill="#a8a8a8"/><rect x="1182.4" y="973" width="1.2" height="12" fill="#000"/><rect x="1196.4" y="973" width="1" height="6" fill="#a8a8a8"/><rect x="1210.2" y="973" width="1" height="6" fill="#a8a8a8"/><rect x="1224.1" y="973" width="1" height="6" fill="#a8a8a8"/><rect x="1237.8" y="973" width="1.2" height="12" fill="#000"/><rect x="1251.8" y="973" width="1" height="6" fill="#a8a8a8"/><rect x="1265.7" y="973" width="1" height="6" fill="#a8a8a8"/><rect x="1279.5" y="973" width="1" height="6" fill="#a8a8a8"/><rect x="1293.3" y="973" width="1.2" height="12" fill="#000"/><rect x="1307.2" y="973" width="1" height="6" fill="#a8a8a8"/><rect x="1321.1" y="973" width="1" height="6" fill="#a8a8a8"/><rect x="1335.0" y="973" width="1" height="6" fill="#a8a8a8"/><rect x="1348.7" y="973" width="1.2" height="12" fill="#000"/><rect x="1362.7" y="973" width="1" height="6" fill="#a8a8a8"/><rect x="1376.5" y="973" width="1" height="6" fill="#a8a8a8"/><rect x="1390.4" y="973" width="1" height="6" fill="#a8a8a8"/><rect x="1404.2" y="973" width="1.2" height="12" fill="#000"/><rect x="1418.1" y="973" width="1" height="6" fill="#a8a8a8"/><rect x="1432.0" y="973" width="1" height="6" fill="#a8a8a8"/><rect x="1445.8" y="973" width="1" height="6" fill="#a8a8a8"/><rect x="1459.6" y="973" width="1.2" height="12" fill="#000"/><rect x="1473.6" y="973" width="1" height="6" fill="#a8a8a8"/><rect x="1487.4" y="973" width="1" height="6" fill="#a8a8a8"/><rect x="1501.3" y="973" width="1" height="6" fill="#a8a8a8"/><rect x="1515.0" y="973" width="1.2" height="12" fill="#000"/><rect x="1529.0" y="973" width="1" height="6" fill="#a8a8a8"/><rect x="1542.9" y="973" width="1" height="6" fill="#a8a8a8"/><rect x="1556.7" y="973" width="1" height="6" fill="#a8a8a8"/><rect x="1570.5" y="973" width="1.2" height="12" fill="#000"/><rect x="1584.4" y="973" width="1" height="6" fill="#a8a8a8"/><rect x="1598.3" y="973" width="1" height="6" fill="#a8a8a8"/><rect x="1612.2" y="973" width="1" height="6" fill="#a8a8a8"/><rect x="1625.9" y="973" width="1.2" height="12" fill="#000"/><rect x="1639.9" y="973" width="1" height="6" fill="#a8a8a8"/><rect x="1653.7" y="973" width="1" height="6" fill="#a8a8a8"/><rect x="1667.6" y="973" width="1" height="6" fill="#a8a8a8"/><rect x="1681.4" y="973" width="1.2" height="12" fill="#000"/><rect x="1695.3" y="973" width="1" height="6" fill="#a8a8a8"/><rect x="1709.2" y="973" width="1" height="6" fill="#a8a8a8"/><rect x="1723.0" y="973" width="1" height="6" fill="#a8a8a8"/><rect x="1736.8" y="973" width="1.2" height="12" fill="#000"/><rect x="1750.8" y="973" width="1" height="6" fill="#a8a8a8"/><rect x="1764.6" y="973" width="1" height="6" fill="#a8a8a8"/><rect x="1778.5" y="973" width="1" height="6" fill="#a8a8a8"/><rect x="1792.2" y="973" width="1.2" height="12" fill="#000"/><rect x="1806.2" y="973" width="1" height="6" fill="#a8a8a8"/><rect x="1820.1" y="973" width="1" height="6" fill="#a8a8a8"/><rect x="1283" y="973" width="1" height="7" fill="#111"/></svg>
<span class="t" style="top:986px;font-size:9.5px;line-height:13px;left:631.50px;">0</span>
<span class="t" style="top:986px;font-size:9.5px;line-height:13px;left:681.59px;">2</span>
<span class="t" style="top:986px;font-size:9.5px;line-height:13px;left:737.03px;">4</span>
<span class="t" style="top:986px;font-size:9.5px;line-height:13px;left:792.47px;">6</span>
<span class="t" style="top:986px;font-size:9.5px;line-height:13px;left:847.91px;">8</span>
<span class="t" style="top:986px;font-size:9.5px;line-height:13px;letter-spacing:-0.039px;left:900.73px;">10</span>
<span class="t" style="top:986px;font-size:9.5px;line-height:13px;letter-spacing:-0.039px;left:956.17px;">12</span>
<span class="t" style="top:986px;font-size:9.5px;line-height:13px;letter-spacing:-0.039px;left:1011.61px;">14</span>
<span class="t" style="top:986px;font-size:9.5px;line-height:13px;letter-spacing:-0.039px;left:1067.05px;">16</span>
<span class="t" style="top:986px;font-size:9.5px;line-height:13px;letter-spacing:-0.039px;left:1122.49px;">18</span>
<span class="t" style="top:986px;font-size:9.5px;line-height:13px;letter-spacing:-0.039px;left:1177.93px;">20</span>
<span class="t" style="top:986px;font-size:9.5px;line-height:13px;letter-spacing:-0.039px;left:1233.37px;">22</span>
<span class="t" style="top:986px;font-size:9.5px;line-height:13px;letter-spacing:-0.039px;left:1344.25px;">26</span>
<span class="t" style="top:986px;font-size:9.5px;line-height:13px;letter-spacing:-0.039px;left:1399.69px;">28</span>
<span class="t" style="top:986px;font-size:9.5px;line-height:13px;letter-spacing:-0.039px;left:1455.13px;">30</span>
<span class="t" style="top:986px;font-size:9.5px;line-height:13px;letter-spacing:-0.039px;left:1510.57px;">32</span>
<span class="t" style="top:986px;font-size:9.5px;line-height:13px;letter-spacing:-0.039px;left:1566.01px;">34</span>
<span class="t" style="top:986px;font-size:9.5px;line-height:13px;letter-spacing:-0.039px;left:1621.45px;">36</span>
<span class="t" style="top:986px;font-size:9.5px;line-height:13px;letter-spacing:-0.039px;left:1676.89px;">38</span>
<span class="t" style="top:986px;font-size:9.5px;line-height:13px;letter-spacing:-0.039px;left:1732.33px;">40</span>
<span class="t" style="top:986px;font-size:9.5px;line-height:13px;letter-spacing:-0.039px;left:1787.77px;">42</span>
<div class="b" style="left:1250px;top:979px;width:66px;height:17px;background:#fff;border:1px solid #000;"></div>
<span class="t" style="top:982px;font-size:9.7px;line-height:13px;letter-spacing:-0.432px;left:1252.90px;">23.608898257s</span>
<div class="b" style="left:630px;top:999px;width:1203px;height:17px;background:#f0f0f0;"></div>
<svg style="left:637px;top:1003px" width="6" height="9" viewBox="0 0 6 9" ><path d="M5 0.5 L1 4.5 L5 8.5" fill="none" stroke="#c4c4c4" stroke-width="1.2"/></svg>
<svg style="left:1820px;top:1003px" width="6" height="9" viewBox="0 0 6 9" ><path d="M1 0.5 L5 4.5 L1 8.5" fill="none" stroke="#c4c4c4" stroke-width="1.2"/></svg>
<span class="t" style="top:973px;font-size:11.5px;line-height:14px;letter-spacing:-0.081px;left:512.42px;">Start:</span>
<span class="t" style="top:972px;font-size:10.8px;line-height:14px;letter-spacing:-0.464px;left:543.50px;font-family:'Liberation Mono', monospace;"> 0.023397082s</span>
<span class="t" style="top:987px;font-size:11.5px;line-height:14px;letter-spacing:-0.293px;left:516.71px;">End:</span>
<span class="t" style="top:987px;font-size:10.8px;line-height:14px;letter-spacing:-0.464px;left:543.50px;font-family:'Liberation Mono', monospace;">43.407736400s</span>
<span class="t" style="top:1003px;font-size:11.5px;line-height:14px;letter-spacing:0.203px;left:491.20px;">Duration:</span>
<span class="t" style="top:1003px;font-size:10.8px;line-height:14px;letter-spacing:-0.464px;left:543.50px;font-family:'Liberation Mono', monospace;">43.384339318s</span>
</div>
</main>
</div>
</body></html>
